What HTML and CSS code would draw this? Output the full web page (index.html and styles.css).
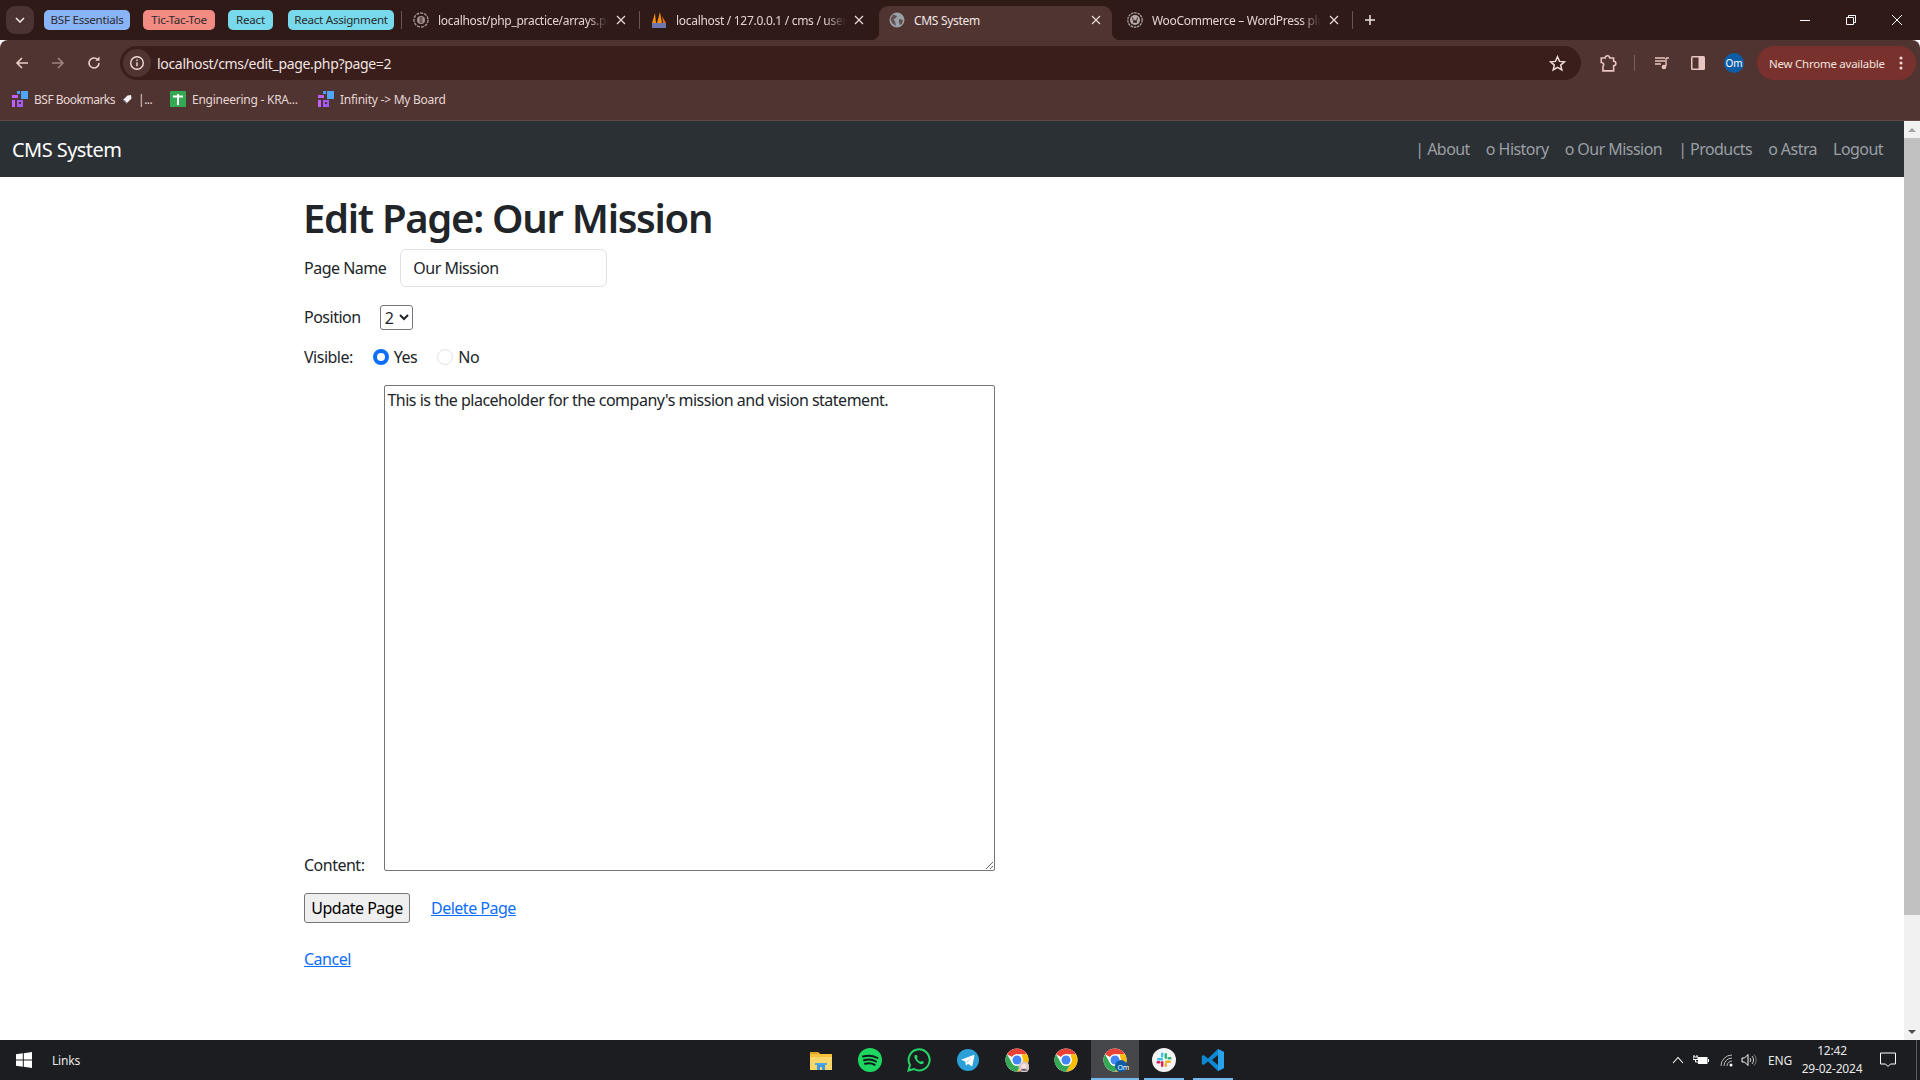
FILE: index.html
```html
<!DOCTYPE html>
<html lang="en">
<head>
<meta charset="utf-8">
<title>CMS System</title>
<link rel="stylesheet" href="styles.css">
</head>
<body>
<svg class="defs" width="0" height="0">
  <symbol id="chrome" viewBox="0 0 48 48">
    <circle cx="24" cy="24" r="23" fill="#fff"/>
    <path fill="#ea4335" d="M4.1 12.5A23 23 0 0 1 43.9 12.5H24A11.5 11.5 0 0 0 14 18.2Z"/>
    <path fill="#fbbc04" d="M43.9 12.5A23 23 0 0 1 24 47L34 29.8A11.5 11.5 0 0 0 34 18.2L33.9 12.5Z"/>
    <path fill="#34a853" d="M24 47A23 23 0 0 1 4.1 12.5L14 29.8A11.5 11.5 0 0 0 34 29.8Z"/>
    <circle cx="24" cy="24" r="11.5" fill="#fff"/>
    <circle cx="24" cy="24" r="9" fill="#4285f4"/>
  </symbol>
  <symbol id="board" viewBox="0 0 16 16">
    <rect x="0" y="9" width="3" height="7" fill="#c061ff"/>
    <rect x="0" y="4" width="6" height="3" fill="#c061ff"/>
    <rect x="5" y="9" width="6" height="7" fill="#a25afd"/>
    <rect x="7" y="11" width="2" height="2" fill="#503432"/>
    <rect x="5" y="0" width="3" height="3" fill="#4f9bff"/>
    <rect x="9" y="0" width="7" height="8" fill="#4fa6f8"/>
  </symbol>
  <symbol id="close" viewBox="0 0 10 10">
    <path d="M1 1 9 9M9 1 1 9" stroke="#e8d8d5" stroke-width="1.3" fill="none"/>
  </symbol>
  <symbol id="globe" viewBox="0 0 16 16">
    <circle cx="8" cy="8" r="7.5" fill="#9aa0a6"/>
    <path d="M4 2.5 8 4 7 6 4.5 7 6 9.5 7 14 3 11 1.5 7ZM10 7l4 1-1 4-2 1-1-3Z" fill="#503432" opacity=".75"/>
  </symbol>
</svg>

<header class="tabstrip">
  <div class="tabsearch"><svg width="10" height="6" viewBox="0 0 10 6"><path d="M1 1 5 5 9 1" stroke="#f0e4e2" stroke-width="1.6" fill="none"/></svg></div>
  <span class="pill pill-blue w-essentials">BSF Essentials</span>
  <span class="pill pill-red w-tic">Tic-Tac-Toe</span>
  <span class="pill pill-cyan w-react">React</span>
  <span class="pill pill-cyan w-assign">React Assignment</span>
  <i class="tabsep"></i>
  <div class="tab tab-a">
    <svg class="fav" viewBox="0 0 16 16"><circle cx="8" cy="8" r="7" fill="none" stroke="#a09391" stroke-width="1.4" stroke-dasharray="3 1"/><circle cx="8" cy="8" r="4" fill="#a09391"/><path d="M6.5 6h3M6.5 8h3M6.5 10h3" stroke="#2f1a17"/></svg>
    <span class="tabtext">localhost/php_practice/arrays.php</span>
    <svg class="x"><use href="#close"/></svg>
  </div>
  <i class="tabsep"></i>
  <div class="tab tab-b">
    <svg class="fav" viewBox="0 0 16 16"><path d="M1 11 4 1l1 10ZM6 11 9 0l2 11Z" fill="#f29111"/><path d="M11 4l4 7h-3Z" fill="#e86a10"/><rect x="1" y="11" width="14" height="5" fill="#6c78af"/></svg>
    <span class="tabtext">localhost / 127.0.0.1 / cms / users</span>
    <svg class="x"><use href="#close"/></svg>
  </div>
  <div class="tab tab-active">
    <svg class="fav" viewBox="0 0 16 16"><use href="#globe"/></svg>
    <span class="tabtext tabtext-active">CMS System</span>
    <svg class="x"><use href="#close"/></svg>
  </div>
  <div class="tab tab-c">
    <svg class="fav" viewBox="0 0 16 16"><circle cx="8" cy="8" r="7.2" fill="none" stroke="#b5aaa8" stroke-width="1.2" stroke-dasharray="2.5 .8"/><circle cx="8" cy="8" r="5" fill="#b5aaa8"/><path d="M5.5 5.5 7 11l1-3 1 3 1.5-5.500" stroke="#2f1a17" stroke-width=".9" fill="none"/></svg>
    <span class="tabtext">WooCommerce – WordPress plugin</span>
    <svg class="x"><use href="#close"/></svg>
  </div>
  <i class="tabsep"></i>
  <svg class="plus" viewBox="0 0 12 12"><path d="M6 1v10M1 6h10" stroke="#f0e4e2" stroke-width="1.5"/></svg>
  <div class="winctl">
    <svg viewBox="0 0 12 12"><path d="M1 6.5h10" stroke="#fff"/></svg>
    <svg viewBox="0 0 12 12"><path d="M1.5 3.5h7v7h-7ZM3.5 3.5v-2h7v7h-2" stroke="#fff" fill="none"/></svg>
    <svg viewBox="0 0 12 12"><path d="M1 1 11 11M11 1 1 11" stroke="#fff" fill="none"/></svg>
  </div>
</header>

<div class="toolbar">
  <svg class="navbtn" viewBox="0 0 16 16"><path d="M14 8H3M8 3 3 8l5 5" stroke="#e8cfca" stroke-width="1.6" fill="none"/></svg>
  <svg class="navbtn" viewBox="0 0 16 16"><path d="M2 8h11M8 3l5 5-5 5" stroke="#9c8481" stroke-width="1.6" fill="none"/></svg>
  <svg class="navbtn" viewBox="0 0 16 16"><path d="M13 8a5 5 0 1 1-1.6-3.7" stroke="#e8cfca" stroke-width="1.6" fill="none"/><path d="M13.5 1.5v4.2H9.3Z" fill="#e8cfca"/></svg>
  <div class="omnibox">
    <span class="infobtn"><svg width="16" height="16" viewBox="0 0 16 16"><circle cx="8" cy="8" r="6.3" stroke="#f0dcd8" stroke-width="1.4" fill="none"/><path d="M8 7.2v4M8 4.5v1.4" stroke="#f0dcd8" stroke-width="1.4"/></svg></span>
    <span class="url">localhost/cms/edit_page.php?page=2</span>
    <svg class="star" viewBox="0 0 16 16"><path d="M8 1.6 9.900 6l4.700.4-3.600 3.100 1.100 4.600L8 11.700l-4.100 2.400L5 9.500 1.400 6.400 6.100 6Z" stroke="#f0dcd8" stroke-width="1.4" fill="none"/></svg>
  </div>
  <svg class="tool-ext" viewBox="0 0 16 16"><path d="M2 3.500h3.500a2 2 0 0 1 4 0H13v3a2 2 0 0 1 0 4V15H3.500V11a2 2 0 0 0-1.500-3.500Z" stroke="#eac5bf" stroke-width="1.4" fill="none"/></svg>
  <i class="toolsep"></i>
  <svg class="tool-media" viewBox="0 0 16 16"><path d="M1 3h10M1 6h10M1 9h6" stroke="#eac5bf" stroke-width="1.4"/><path d="M12 3h3M12 3v8" stroke="#eac5bf" stroke-width="1.4"/><circle cx="10" cy="12" r="2.300" fill="#eac5bf"/></svg>
  <svg class="tool-side" viewBox="0 0 16 16"><rect x="1" y="1" width="14" height="14" rx="1.500" fill="#eac5bf"/><rect x="2.500" y="2.500" width="6" height="11" fill="#503432"/></svg>
  <span class="avatar">Om</span>
  <div class="update"><span>New Chrome available</span><svg width="4" height="16" viewBox="0 0 4 16"><circle cx="2" cy="3" r="1.500" fill="#f0dcd8"/><circle cx="2" cy="8" r="1.500" fill="#f0dcd8"/><circle cx="2" cy="13" r="1.500" fill="#f0dcd8"/></svg></div>
</div>

<nav class="bookmarks">
  <div class="bm bm-1"><svg class="bmicon"><use href="#board"/></svg><span>BSF Bookmarks</span><svg class="tagicon" viewBox="0 0 10 10"><path d="M5.500 1.500 9 1l.5 3.500-5 5L1 6Z" fill="#f2f2f2"/><path d="M1.500 6l3 3" stroke="#333"/></svg><span>|...</span></div>
  <div class="bm bm-2"><svg class="bmicon" viewBox="0 0 16 16"><rect width="16" height="16" rx="1" fill="#34a853"/><path d="M3 5.500h10M8 3v11" stroke="#fff" stroke-width="2"/></svg><span>Engineering - KRA...</span></div>
  <div class="bm bm-3"><svg class="bmicon"><use href="#board"/></svg><span>Infinity -&gt; My Board</span></div>
</nav>

<div class="viewport">
  <div class="page">
    <div class="navbar">
      <a class="brand">CMS System</a>
      <ul class="navlinks">
        <li>| About</li><li>o History</li><li>o Our Mission</li><li>| Products</li><li>o Astra</li><li>Logout</li>
      </ul>
    </div>
    <main class="container">
      <h1>Edit Page: Our Mission</h1>
      <form>
        <div class="row row-name">
          <label for="n">Page Name</label>
          <input id="n" class="text-input" type="text" value="Our Mission">
        </div>
        <div class="row row-pos">
          <label for="p">Position</label>
          <select id="p" class="pos-select"><option>1</option><option selected>2</option><option>3</option></select>
        </div>
        <div class="row row-vis">
          <span class="vis-label">Visible:</span>
          <input class="radio" type="radio" name="v" id="y" checked><label class="radio-label" for="y">Yes</label>
          <input class="radio radio-no" type="radio" name="v" id="o"><label class="radio-label" for="o">No</label>
        </div>
        <div class="content-row">
          <label class="content-label" for="c">Content:</label><textarea id="c" class="content-area">This is the placeholder for the company's mission and vision statement.</textarea>
        </div>
        <div class="row row-actions">
          <button class="update-btn" type="button">Update Page</button>
          <a class="link" href="#">Delete Page</a>
        </div>
      </form>
      <p class="cancel"><a class="link" href="#">Cancel</a></p>
    </main>
  </div>
  <aside class="scrollbar">
    <div class="arrow"><i class="tri-up"></i></div>
    <div class="track"><div class="thumb"></div></div>
    <div class="arrow"><i class="tri-down"></i></div>
  </aside>
</div>

<footer class="taskbar">
  <svg class="win" viewBox="0 0 16 16"><path d="M0 2.300 6.800 1.300V7.500H0ZM7.800 1.200 16 0V7.500H7.800ZM0 8.500H6.800V14.700L0 13.700ZM7.800 8.500H16V16L7.800 14.800Z" fill="#fff"/></svg>
  <span class="links">Links</span>
  <div class="apps">
    <div class="app">
      <svg viewBox="0 0 24 24"><path d="M1 4h8l2 2h12v16H1Z" fill="#f5c33b"/><path d="M1 4h8l2 2H1Z" fill="#e0a526"/><path d="M1 9h22v13H1Z" fill="#fbd76b"/><path d="M8 22v-5a1 1 0 0 1 1-1h6a1 1 0 0 1 1 1v5h-3v-3h-2v3Z" fill="#3f9ae0"/><rect x="6" y="15" width="12" height="2" fill="#4aa8e8"/></svg>
    </div>
    <div class="app">
      <svg viewBox="0 0 24 24"><circle cx="12" cy="12" r="12" fill="#1ed760"/><path d="M5 8.500c5-1.500 10-1 14.500 1.500M6 12.300c4-1.200 8.500-.8 12 1.200M7 15.800c3.500-.9 7-.6 9.700 1" stroke="#14181a" stroke-width="2" stroke-linecap="round" fill="none"/></svg>
    </div>
    <div class="app">
      <svg viewBox="0 0 24 24"><path d="M1.500 22.500 3 17A10.500 10.500 0 1 1 7 21Z" fill="none" stroke="#25d366" stroke-width="2"/><path d="M8 7c-1 1-1 3 1 5.500s4.500 4.200 6.500 3.500c1-.4 1.500-1.500 1.300-2l-2.300-1.200-1 1c-1.500-.5-3-2-3.700-3.500l.9-1.100L9.800 7Z" fill="#25d366"/></svg>
    </div>
    <div class="app">
      <svg viewBox="0 0 24 24"><circle cx="12" cy="12" r="11" fill="#2a9fd8"/><path d="M5 11.800 17.500 7c.6-.2 1 .1.900.9l-2 9.600c-.2.700-.6.800-1.100.5l-3.200-2.300-1.500 1.500c-.3.300-.6.200-.7-.2l-.6-3.500Z" fill="#fff"/><path d="M10 14 16 9l-5 6Z" fill="#b5d9ef"/></svg>
    </div>
    <div class="app">
      <svg viewBox="0 0 48 48"><use href="#chrome"/><circle cx="38" cy="38" r="11" fill="#d9c6cc"/><circle cx="38" cy="36" r="5" fill="#f3e2dc"/><path d="M31 45a8 6 0 0 1 14 0Z" fill="#3a3340"/></svg>
    </div>
    <div class="app">
      <svg viewBox="0 0 48 48"><use href="#chrome"/></svg>
    </div>
    <div class="app app-active">
      <svg viewBox="0 0 48 48"><use href="#chrome"/><circle cx="36" cy="36" r="12" fill="#0b5ea6"/></svg>
      <span class="badge">Om</span>
    </div>
    <div class="app app-open">
      <svg viewBox="0 0 24 24"><circle cx="12" cy="12" r="12" fill="#f4f4f4"/><rect x="5" y="10" width="6" height="2.400" rx="1.200" fill="#36c5f0"/><rect x="9" y="4.500" width="2.400" height="5" rx="1.200" fill="#36c5f0"/><rect x="12.600" y="5" width="2.400" height="6" rx="1.200" fill="#2eb67d"/><rect x="15.500" y="9" width="4" height="2.400" rx="1.200" fill="#2eb67d"/><rect x="13" y="12.600" width="6" height="2.400" rx="1.200" fill="#ecb22e"/><rect x="12.600" y="15" width="2.400" height="4" rx="1.200" fill="#ecb22e"/><rect x="9" y="13" width="2.400" height="6" rx="1.200" fill="#e01e5a"/><rect x="4.500" y="13" width="4" height="2.400" rx="1.200" fill="#e01e5a"/></svg>
    </div>
    <div class="app app-open">
      <svg viewBox="0 0 24 24"><path d="M17 1 23 4V20L17 23 7 13.500 2.500 17 .8 16V8L2.500 7 7 10.500ZM17 7 11 12l6 5Z" fill="#0e88d3"/><path d="M17 1 23 4V20L17 23Z" fill="#29a4ec"/></svg>
    </div>
  </div>
  <div class="tray">
    <svg class="t-chev" viewBox="0 0 12 8"><path d="M1 7 6 1.500 11 7" stroke="#fff" fill="none" stroke-width="1.100"/></svg>
    <svg class="t-batt" viewBox="0 0 16 12"><path d="M1 1v2M4 1v2M0 3h5v2.500H0ZM2.500 5.500V8H6" stroke="#fff" fill="none"/><rect x="5" y="3" width="9.500" height="7" fill="#fff"/><rect x="15" y="5" width="1" height="3" fill="#fff"/></svg>
    <svg class="t-wifi" viewBox="0 0 14 14"><path d="M1 13A11 11 0 0 1 12 2M4 13A8 8 0 0 1 12 5M7 13a5 5 0 0 1 5-5" stroke="#b9babb" fill="none"/><circle cx="11" cy="12" r="1.500" fill="#fff"/></svg>
    <svg class="t-vol" viewBox="0 0 16 14"><path d="M1 5h2.500L7 1.500v11L3.500 9H1Z" stroke="#fff" fill="none"/><path d="M9 5a3 3 0 0 1 0 4M11 3a6 6 0 0 1 0 8" stroke="#d0d0d0" fill="none"/><path d="M13 1.500a8 8 0 0 1 0 11" stroke="#777" fill="none"/></svg>
    <span class="t-eng">ENG</span>
    <div class="clock"><span>12:42</span><span>29-02-2024</span></div>
    <svg class="t-note" viewBox="0 0 16 16"><path d="M.5 1h15v11h-5L8 14.500 5.500 12H.5Z" stroke="#fff" fill="none"/></svg>
    <i class="t-show"></i>
  </div>
</footer>
</body>
</html>
```

FILE: styles.css
```css
* { box-sizing: border-box; }
html, body { margin: 0; height: 100%; }
body {
  width: 1920px; height: 1080px; overflow: hidden;
  display: flex; flex-direction: column;
  font-family: "Noto Sans", "Open Sans", sans-serif;
  background: #fff; color: #212529;
}
.defs { position: absolute; }

/* tab strip */
.tabstrip {
  height: 40px; flex: none; display: flex; align-items: center;
  background: #2f1a17; padding-left: 6px;
  font-size: 12px; letter-spacing: -.3px; color: #e3d3d0;
}
.tabsearch {
  width: 28px; height: 28px; border-radius: 9px; background: #4a3330;
  display: flex; align-items: center; justify-content: center; margin-right: 10px;
}
.pill { height: 20px; line-height: 20px; border-radius: 5px; text-align: center; color: #2c2a2a; font-size: 11.600px; letter-spacing: -.25px; margin-right: 13px; flex: none; }
.pill-blue { background: #8ab4f8; }
.pill-red { background: #f28b82; }
.pill-cyan { background: #78d9ec; }
.w-essentials { width: 86px; }
.w-tic { width: 72px; }
.w-react { width: 45px; margin-right: 15px; }
.w-assign { width: 106px; margin-right: 7px; }
.tabsep { width: 1px; height: 18px; background: #6a5451; flex: none; }
.tab { height: 34px; margin-top: 6px; padding-bottom: 6px; display: flex; align-items: center; flex: none; position: relative; }
.tab-a { width: 237px; padding-left: 11px; }
.tab-b { width: 239px; padding-left: 11px; }
.tab-active { width: 233px; padding-left: 10px; background: #503432; border-radius: 9px 9px 0 0; color: #f2e6e4; }
.tab-active .x { margin-right: 11px; }
.tab-active::before, .tab-active::after {
  content: ""; position: absolute; bottom: 0; width: 8px; height: 8px;
}
.tab-active::before { left: -8px; background: radial-gradient(circle at 0 0, transparent 8px, #503432 8.500px); }
.tab-active::after { right: -8px; background: radial-gradient(circle at 100% 0, transparent 8px, #503432 8.500px); }
.tab-c { width: 240px; padding-left: 15px; }
.tab-c .x { margin-right: 13px; }
.tab-b .x { margin-right: 15px; }
.fav { width: 16px; height: 16px; flex: none; margin-right: 9px; }
.tabtext { flex: 1; min-width: 0; white-space: nowrap; overflow: hidden; -webkit-mask-image: linear-gradient(90deg, #000 88%, transparent); mask-image: linear-gradient(90deg, #000 88%, transparent); }
.tabtext-active { -webkit-mask-image: none; mask-image: none; }
.x { width: 10px; height: 10px; flex: none; margin: 0 13px 0 8px; }
.plus { width: 12px; height: 12px; margin-left: 11px; flex: none; }
.winctl { margin-left: auto; display: flex; align-items: center; gap: 34px; padding-right: 17px; }
.winctl svg { width: 12px; height: 12px; display: block; }

/* toolbar */
.toolbar {
  height: 40px; flex: none; background: #503432; display: flex; align-items: center;
  padding: 6px 0 0 14px; border-radius: 8px 8px 0 0;
}
.navbtn { width: 16px; height: 16px; margin-right: 20px; flex: none; }
.navbtn:nth-of-type(3) { margin-right: 18px; }
.omnibox {
  width: 1461px; height: 34px; border-radius: 17px; background: #391e1b;
  display: flex; align-items: center; flex: none; margin-top: 0;
}
.infobtn { width: 28px; height: 28px; margin-left: 3px; border-radius: 50%; background: #503432; display: flex; align-items: center; justify-content: center; }
.url { margin-left: 6px; font-size: 14px; letter-spacing: -.32px; color: #f1e3e0; }
.star { width: 17px; height: 17px; margin-left: auto; margin-right: 15px; }
.tool-ext { width: 18px; height: 18px; margin-left: 18px; flex: none; }
.toolsep { width: 1px; height: 16px; background: #795f5c; margin-left: 17px; flex: none; }
.tool-media { width: 16px; height: 16px; margin-left: 19px; flex: none; }
.tool-side { width: 16px; height: 16px; margin-left: 20px; flex: none; }
.avatar { width: 20px; height: 20px; border-radius: 50%; background: #0b5ea6; color: #fff; font-size: 10px; letter-spacing: -.2px; text-align: center; line-height: 20px; margin-left: 18px; flex: none; }
.update {
  width: 159px; height: 34px; border-radius: 17px; background: #78312c; margin-left: 13px; flex: none;
  display: flex; align-items: center; justify-content: space-between; padding: 0 13px 0 12px;
  font-size: 11.500px; letter-spacing: -.25px; color: #f3e2df;
}

/* bookmarks */
.bookmarks {
  height: 41px; flex: none; background: #503432; border-bottom: 1px solid #5f4846;
  display: flex; align-items: center; font-size: 12px; letter-spacing: -.25px; color: #e6d6d3; padding: 0 0 2px 12px;
}
.bm { display: flex; align-items: center; gap: 6px; flex: none; }
.bm-1 { width: 158px; letter-spacing: -.5px; }
.bm-2 { width: 148px; }
.bmicon { width: 16px; height: 16px; flex: none; }
.tagicon { width: 10px; height: 10px; flex: none; margin-left: 1px; }

/* page */
.viewport { flex: 1; min-height: 0; display: flex; }
.page { flex: 1; min-width: 0; overflow: hidden; }
.navbar {
  height: 56px; background: #2b3035; display: flex; align-items: center; justify-content: space-between;
  padding: 0 12px 0 12px;
}
.brand { color: #fff; font-size: 20px; letter-spacing: -.55px; }
.navlinks { display: flex; list-style: none; margin: 0; padding: 0 9px 0 0; gap: 16px; font-size: 16px; letter-spacing: -.55px; color: #9b9fa3; }
.container { width: 1320px; margin: 0 auto; padding: 17px 12px 0; font-size: 16px; letter-spacing: -.5px; }
h1 { margin: 0 0 7px -1px; font-size: 40px; line-height: 48px; font-weight: 600; letter-spacing: -1.280px; }
.row { display: flex; align-items: center; }
.row-name { height: 38px; gap: 14px; }
.text-input {
  width: 207px; height: 38px; padding: 6px 12px; border: 1px solid #dee2e6; border-radius: 6px;
  font: inherit; letter-spacing: inherit; color: #212529; outline: none;
}
.row-pos { height: 28px; margin-top: 16px; gap: 19px; }
.pos-select { width: 33px; height: 25px; font: inherit; letter-spacing: inherit; color: #212529; background: #fff; border: 1px solid #767676; border-radius: 3px; }
.row-vis { height: 24px; margin-top: 14px; }
.vis-label { margin-right: 20px; }
.radio {
  appearance: none; width: 16px; height: 16px; margin: 0 5px 0 0; border-radius: 50%;
  border: 1px solid #dee2e6; background: #fff; flex: none;
}
.radio:checked { background: #fff; border: 4px solid #0d6efd; }
.radio-no { margin-left: 20px; }
.content-row { margin-top: 16px; }
.content-label { margin-right: 20px; }
.content-area {
  width: 611px; height: 486px; padding: 3px 2px 2px; font: inherit; letter-spacing: inherit; color: #212529;
  border: 1px solid #767676; border-radius: 2px; outline: none; margin: 0;
}
.row-actions { height: 30px; margin-top: 17px; gap: 21px; }
.update-btn {
  width: 106px; height: 30px; padding: 0; font: inherit; letter-spacing: inherit; color: #000;
  background: #efefef; border: 1px solid #767676; border-radius: 3px;
}
.link { color: #0d6efd; text-decoration: underline; }
.cancel { margin: 24px 0 0; line-height: 24px; }

/* scrollbar */
.scrollbar { width: 16px; flex: none; background: #f1f1f1; display: flex; flex-direction: column; }
.arrow { height: 17px; display: flex; align-items: center; justify-content: center; flex: none; }
.tri-up { border: 4px solid transparent; border-top: 0; border-bottom: 4px solid #a3a3a3; }
.tri-down { border: 4px solid transparent; border-bottom: 0; border-top: 4px solid #505050; }
.track { flex: 1; }
.thumb { height: 777px; background: #c1c1c1; }

/* taskbar */
.taskbar {
  height: 40px; flex: none; background: #1b1d20; display: flex; align-items: center; position: relative;
  color: #e8e8e8; font-size: 12px; letter-spacing: -.2px; padding-left: 16px;
}
.win { width: 16px; height: 16px; flex: none; }
.links { margin-left: 20px; width: 60px; }
.apps { display: flex; margin-left: 685px; gap: 1px; align-items: stretch; height: 40px; }
.app { width: 48px; height: 40px; display: flex; align-items: center; justify-content: center; position: relative; flex: none; }
.app svg { width: 24px; height: 24px; }
.app-open::after { content: ""; position: absolute; left: 4px; right: 4px; bottom: 0; height: 2px; background: #76b9ed; }
.app-active { background: #45474a; }
.app-active::after { content: ""; position: absolute; left: 0; right: 0; bottom: 0; height: 2px; background: #76b9ed; }
.badge { position: absolute; right: 10px; bottom: 8px; font-size: 7px; color: #fff; letter-spacing: -.2px; }
.tray { margin-left: auto; display: flex; align-items: center; height: 40px; }
.t-chev { width: 12px; height: 8px; margin-right: 9px; }
.t-batt { width: 16px; height: 12px; margin-right: 11px; }
.t-wifi { width: 14px; height: 14px; margin-right: 7px; }
.t-vol { width: 16px; height: 14px; margin-right: 11px; }
.t-eng { width: 24px; }
.clock { width: 76px; margin-left: 2px; display: flex; flex-direction: column; align-items: center; line-height: 18px; }
.t-note { width: 16px; height: 16px; margin-left: 10px; }
.t-show { width: 1px; height: 40px; background: #5a5c5e; margin-left: 20px; margin-right: 3px; }
```
